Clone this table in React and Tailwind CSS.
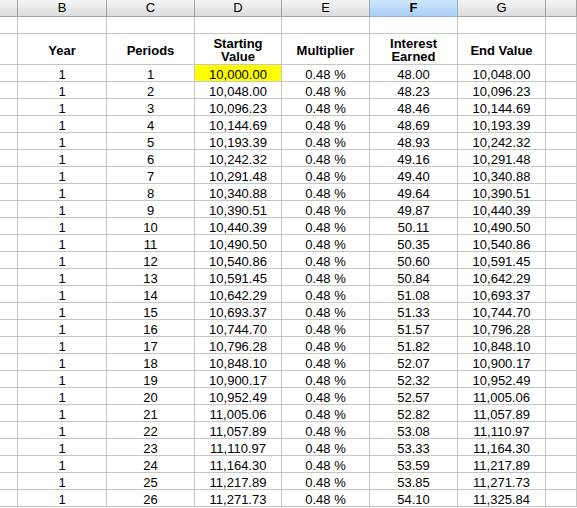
import React from "react";

const rows = [
  ["10,000.00", "48.00", "10,048.00"],
  ["10,048.00", "48.23", "10,096.23"],
  ["10,096.23", "48.46", "10,144.69"],
  ["10,144.69", "48.69", "10,193.39"],
  ["10,193.39", "48.93", "10,242.32"],
  ["10,242.32", "49.16", "10,291.48"],
  ["10,291.48", "49.40", "10,340.88"],
  ["10,340.88", "49.64", "10,390.51"],
  ["10,390.51", "49.87", "10,440.39"],
  ["10,440.39", "50.11", "10,490.50"],
  ["10,490.50", "50.35", "10,540.86"],
  ["10,540.86", "50.60", "10,591.45"],
  ["10,591.45", "50.84", "10,642.29"],
  ["10,642.29", "51.08", "10,693.37"],
  ["10,693.37", "51.33", "10,744.70"],
  ["10,744.70", "51.57", "10,796.28"],
  ["10,796.28", "51.82", "10,848.10"],
  ["10,848.10", "52.07", "10,900.17"],
  ["10,900.17", "52.32", "10,952.49"],
  ["10,952.49", "52.57", "11,005.06"],
  ["11,005.06", "52.82", "11,057.89"],
  ["11,057.89", "53.08", "11,110.97"],
  ["11,110.97", "53.33", "11,164.30"],
  ["11,164.30", "53.59", "11,217.89"],
  ["11,217.89", "53.85", "11,271.73"],
  ["11,271.73", "54.10", "11,325.84"],
];

const grid =
  "grid grid-cols-[18px_89px_88px_87px_88px_88px_88px_1fr]";

function Cell({ children, className = "" }) {
  return (
    <div
      className={
        "border-r border-b border-[#c6c6c6] flex items-end justify-center leading-[12px] " +
        className
      }
    >
      {children}
    </div>
  );
}

function HeadCell({ children, className = "" }) {
  return (
    <div
      className={
        "border-r border-b border-[#c6c6c6] flex flex-col items-center justify-center leading-[13px] pt-[2px] font-bold " +
        className
      }
    >
      {children}
    </div>
  );
}

export default function App() {
  const letters = ["", "B", "C", "D", "E", "F", "G", ""];
  return (
    <div
      className="w-[577px] h-[508px] overflow-hidden bg-white text-black text-[13px]"
      style={{ fontFamily: '"Liberation Sans", Arial, sans-serif' }}
    >
      {/* column letters */}
      <div className={grid + " h-[17px]"}>
        {letters.map((l, i) =>
          l === "F" ? (
            <div
              key={i}
              className="border-r border-b border-[#8fb3d9] bg-gradient-to-b from-[#cfe6fc] to-[#a8cff4] flex items-center justify-center font-bold leading-[16px]"
            >
              {l}
            </div>
          ) : (
            <div
              key={i}
              className="border-r border-b border-[#a3a3a3] bg-gradient-to-b from-[#f6f6f6] to-[#dcdcdc] flex items-center justify-center leading-[16px]"
            >
              {l}
            </div>
          )
        )}
      </div>
      {/* empty row */}
      <div className={grid + " h-[17px]"}>
        {letters.map((_, i) => (
          <Cell key={i} />
        ))}
      </div>
      {/* header row */}
      <div className={grid + " h-[31px]"}>
        <HeadCell />
        <HeadCell>Year</HeadCell>
        <HeadCell>Periods</HeadCell>
        <HeadCell>
          <span>Starting</span>
          <span>Value</span>
        </HeadCell>
        <HeadCell>Multiplier</HeadCell>
        <HeadCell>
          <span>Interest</span>
          <span>Earned</span>
        </HeadCell>
        <HeadCell>End Value</HeadCell>
        <HeadCell />
      </div>
      {rows.map((r, i) => (
        <div key={i} className={grid + " h-[17px]"}>
          <Cell />
          <Cell>1</Cell>
          <Cell>{i + 1}</Cell>
          <Cell className={i === 0 ? "bg-[#ffff00]" : ""}>{r[0]}</Cell>
          <Cell>0.48 %</Cell>
          <Cell>{r[1]}</Cell>
          <Cell>{r[2]}</Cell>
          <Cell />
        </div>
      ))}
    </div>
  );
}
